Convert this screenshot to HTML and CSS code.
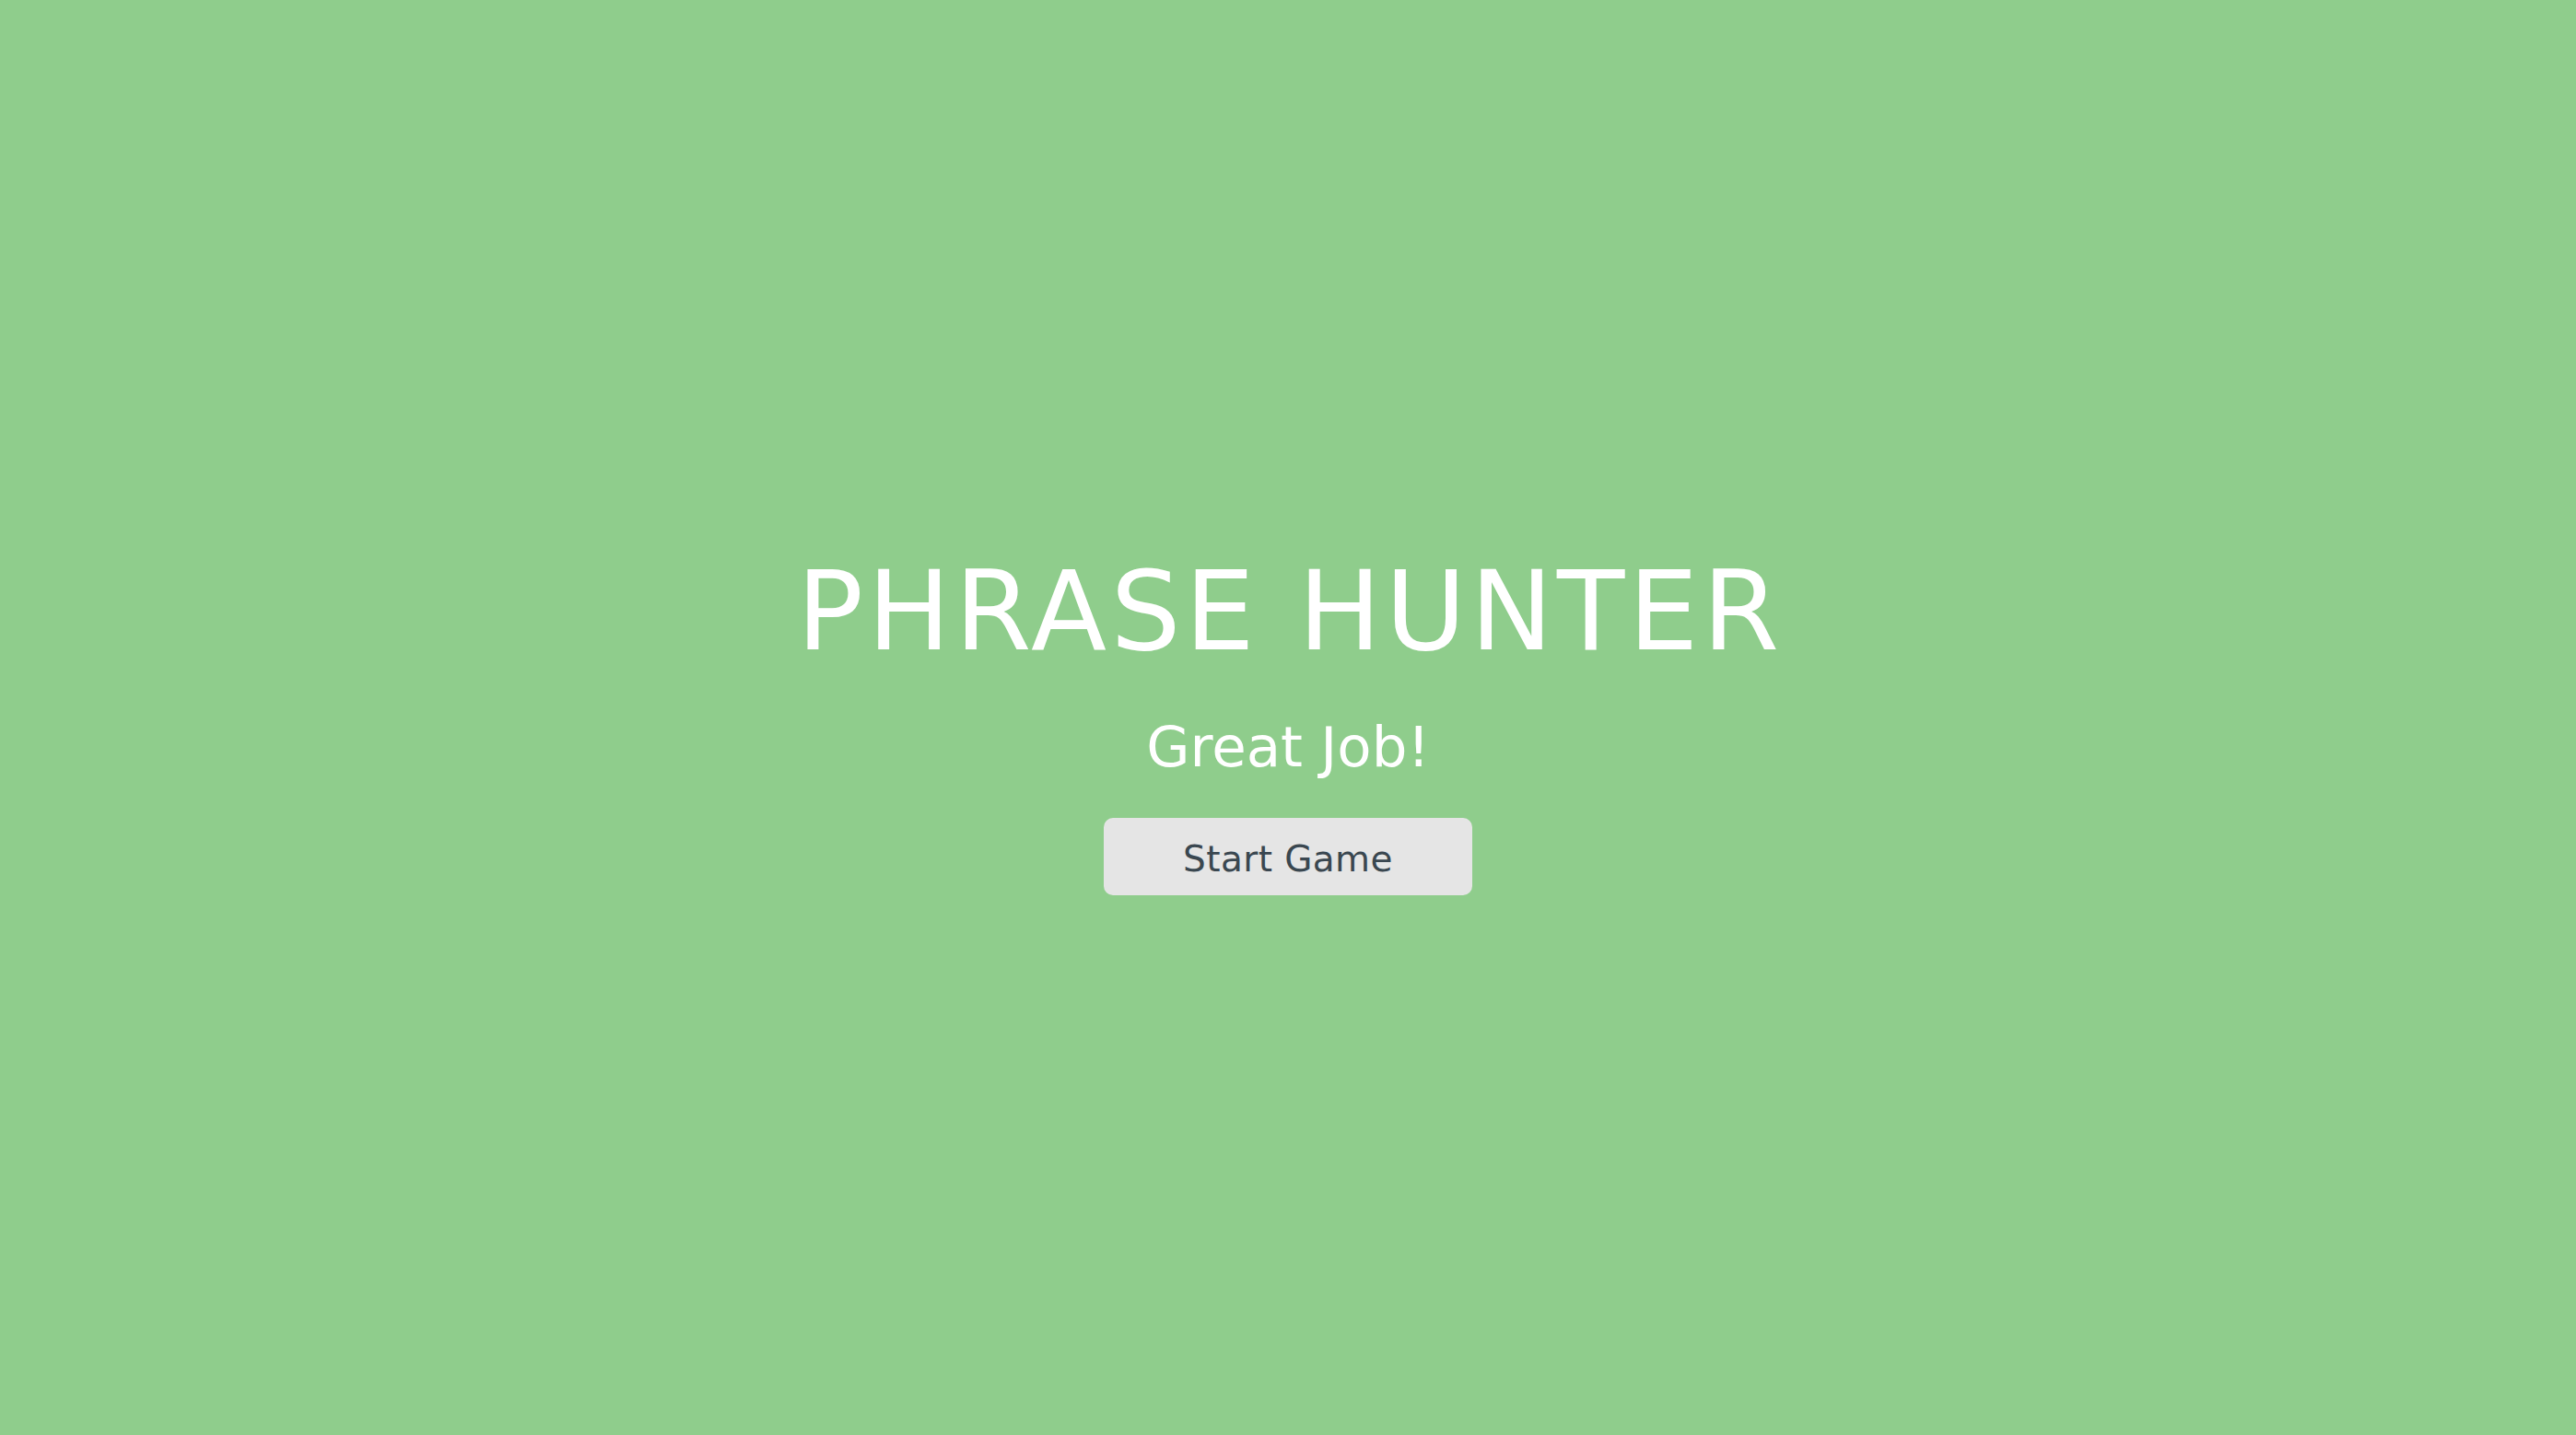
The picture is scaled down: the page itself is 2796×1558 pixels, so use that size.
FILE: index.html
```html
<!DOCTYPE html>
<html lang="en">
<head>
<meta charset="utf-8">
<title>Phrase Hunter</title>
<link rel="stylesheet" href="styles.css">
</head>
<body>
<div class="overlay">
  <h1 class="title">PHRASE HUNTER</h1>
  <h2 class="message">Great Job!</h2>
  <button class="btn-reset">Start Game</button>
</div>
</body>
</html>
```
FILE: styles.css
```css
html, body {
  margin: 0;
  padding: 0;
  height: 100%;
}
body {
  background: #8fcd8c;
  font-family: "DejaVu Sans", sans-serif;
}
.overlay {
  box-sizing: border-box;
  height: 100vh;
  padding-top: 18px;
  display: flex;
  flex-direction: column;
  align-items: center;
  justify-content: center;
  color: #ffffff;
}
.title {
  margin: 0;
  font-size: 120px;
  font-weight: normal;
  line-height: 1;
  letter-spacing: 4.4px;
  text-indent: 4.4px;
}
.message {
  margin: 56px 0 0;
  font-size: 61px;
  font-weight: normal;
  line-height: 1;
}
.btn-reset {
  box-sizing: border-box;
  margin-top: 47px;
  width: 400px;
  height: 84px;
  padding: 5px 0 0;
  border: none;
  border-radius: 10px;
  background: #e5e5e5;
  color: #3a4750;
  font-family: "DejaVu Sans", sans-serif;
  font-size: 39px;
  letter-spacing: 0.4px;
}
```
